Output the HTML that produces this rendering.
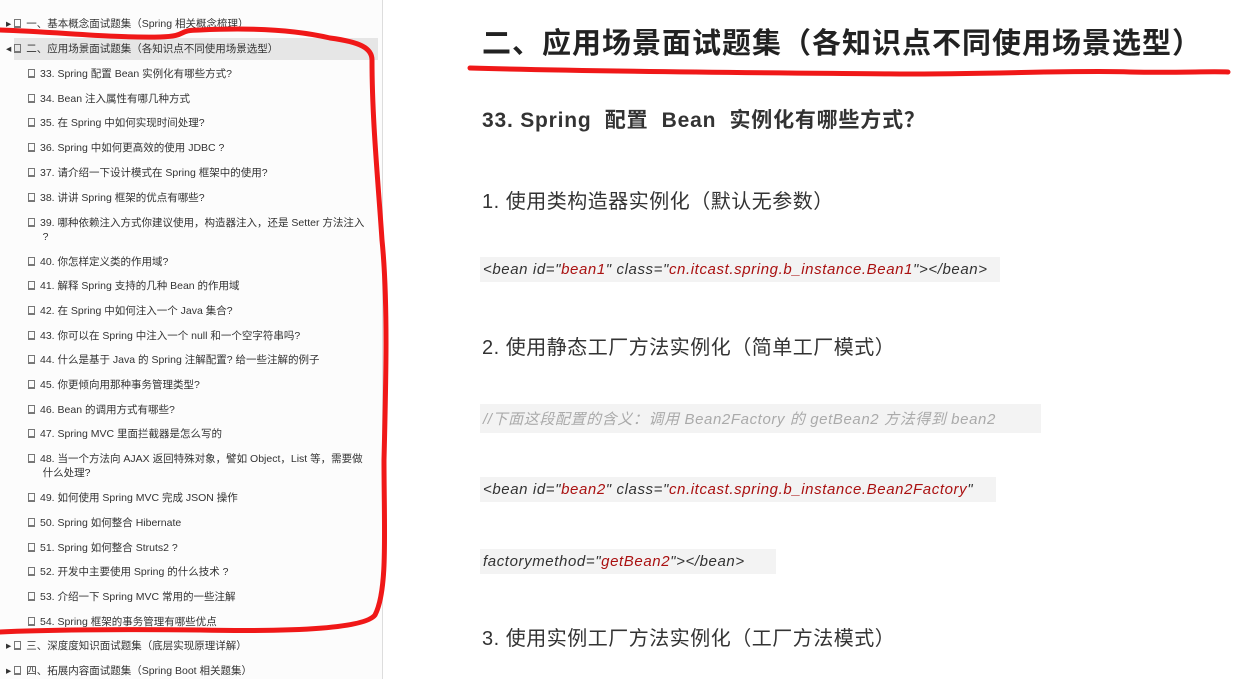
<!DOCTYPE html>
<html><head><meta charset="utf-8"><style>
body{margin:0;width:1240px;height:679px;overflow:hidden;background:#fff;font-family:"Liberation Sans","Noto Sans CJK SC",sans-serif;position:relative}
.side{position:absolute;left:0;top:0;width:382px;height:679px;background:#fcfcfc;border-right:1px solid #ddd}
.r{position:absolute;font-size:10.5px;color:#333;white-space:nowrap;line-height:14px}
.r i{display:inline-block;width:7px;height:9px;border:1px solid #777;border-bottom-width:2px;margin-right:5px;vertical-align:-1px;box-sizing:border-box}
.hl{position:absolute;left:14px;top:38px;width:364px;height:22px;background:#e6e6e6}
.t{position:absolute;color:#333;white-space:nowrap}
.code{position:absolute;left:480px;background:#f3f3f3;font-family:"Liberation Sans","Noto Sans CJK SC",sans-serif;font-style:italic;font-size:15px;letter-spacing:0.6px;color:#333;padding:4px 3px;white-space:nowrap}
.s{color:#a11}
</style></head><body>
<div class="side"></div>
<div class="hl"></div>
<div class="r" style="left:6px;top:17px">▸ <i></i>一、基本概念面试题集（Spring 相关概念梳理）</div>
<div class="r" style="left:6px;top:42px">◂ <i></i>二、应用场景面试题集（各知识点不同使用场景选型）</div>
<div class="r" style="left:28px;top:67px"><i></i>33. Spring 配置 Bean 实例化有哪些方式?</div>
<div class="r" style="left:28px;top:92px"><i></i>34. Bean 注入属性有哪几种方式</div>
<div class="r" style="left:28px;top:116px"><i></i>35. 在 Spring 中如何实现时间处理?</div>
<div class="r" style="left:28px;top:141px"><i></i>36. Spring 中如何更高效的使用 JDBC ?</div>
<div class="r" style="left:28px;top:166px"><i></i>37. 请介绍一下设计模式在 Spring 框架中的使用?</div>
<div class="r" style="left:28px;top:191px"><i></i>38. 讲讲 Spring 框架的优点有哪些?</div>
<div class="r" style="left:28px;top:216px"><i></i>39. 哪种依赖注入方式你建议使用，构造器注入，还是 Setter 方法注入<br>&nbsp;&nbsp;&nbsp;&nbsp;&nbsp;?</div>
<div class="r" style="left:28px;top:255px"><i></i>40. 你怎样定义类的作用域?</div>
<div class="r" style="left:28px;top:279px"><i></i>41. 解释 Spring 支持的几种 Bean 的作用域</div>
<div class="r" style="left:28px;top:304px"><i></i>42. 在 Spring 中如何注入一个 Java 集合?</div>
<div class="r" style="left:28px;top:329px"><i></i>43. 你可以在 Spring 中注入一个 null 和一个空字符串吗?</div>
<div class="r" style="left:28px;top:353px"><i></i>44. 什么是基于 Java 的 Spring 注解配置? 给一些注解的例子</div>
<div class="r" style="left:28px;top:378px"><i></i>45. 你更倾向用那种事务管理类型?</div>
<div class="r" style="left:28px;top:403px"><i></i>46. Bean 的调用方式有哪些?</div>
<div class="r" style="left:28px;top:427px"><i></i>47. Spring MVC 里面拦截器是怎么写的</div>
<div class="r" style="left:28px;top:452px"><i></i>48. 当一个方法向 AJAX 返回特殊对象，譬如 Object，List 等，需要做<br>&nbsp;&nbsp;&nbsp;&nbsp;&nbsp;什么处理?</div>
<div class="r" style="left:28px;top:491px"><i></i>49. 如何使用 Spring MVC 完成 JSON 操作</div>
<div class="r" style="left:28px;top:516px"><i></i>50. Spring 如何整合 Hibernate</div>
<div class="r" style="left:28px;top:541px"><i></i>51. Spring 如何整合 Struts2 ?</div>
<div class="r" style="left:28px;top:565px"><i></i>52. 开发中主要使用 Spring 的什么技术 ?</div>
<div class="r" style="left:28px;top:590px"><i></i>53. 介绍一下 Spring MVC 常用的一些注解</div>
<div class="r" style="left:28px;top:615px"><i></i>54. Spring 框架的事务管理有哪些优点</div>
<div class="r" style="left:6px;top:639px">▸ <i></i>三、深度度知识面试题集（底层实现原理详解）</div>
<div class="r" style="left:6px;top:664px">▸ <i></i>四、拓展内容面试题集（Spring Boot 相关题集）</div>

<div class="t" style="left:482px;top:20px;font-size:29px;font-weight:bold;color:#222;letter-spacing:1px">二、应用场景面试题集（各知识点不同使用场景选型）</div>
<div class="t" style="left:482px;top:104px;font-size:21px;font-weight:bold;letter-spacing:0.8px">33. Spring&nbsp; 配置&nbsp; Bean&nbsp; 实例化有哪些方式？</div>
<div class="t" style="left:482px;top:185px;font-size:20px;letter-spacing:0.5px">1. 使用类构造器实例化（默认无参数）</div>
<div class="code" style="top:257px;width:514px">&lt;bean id="<span class="s">bean1</span>" class="<span class="s">cn.itcast.spring.b_instance.Bean1</span>"&gt;&lt;/bean&gt;</div>
<div class="t" style="left:482px;top:331px;font-size:20px;letter-spacing:0.5px">2. 使用静态工厂方法实例化（简单工厂模式）</div>
<div class="code" style="top:404px;color:#aaa;width:555px">//下面这段配置的含义：调用 Bean2Factory 的 getBean2 方法得到 bean2</div>
<div class="code" style="top:477px;width:510px">&lt;bean id="<span class="s">bean2</span>" class="<span class="s">cn.itcast.spring.b_instance.Bean2Factory</span>"</div>
<div class="code" style="top:549px;width:290px">factorymethod="<span class="s">getBean2</span>"&gt;&lt;/bean&gt;</div>
<div class="t" style="left:482px;top:622px;font-size:20px;letter-spacing:0.5px">3. 使用实例工厂方法实例化（工厂方法模式）</div>

<svg style="position:absolute;left:0;top:0" width="1240" height="679">
<g fill="none" stroke="#f01818" stroke-width="5" stroke-linecap="round" stroke-linejoin="round">
<path d="M0,30 C60,32 110,38 160,37 C190,36 175,30 200,30 C260,27 300,31 330,38 C360,42 372,48 372,60 C372,120 378,180 382,240 C388,300 386,380 384,460 C384,530 388,590 375,615 C365,628 300,632 200,630 C120,629 40,630 0,632"/>
<path d="M470,68 C600,72 800,73 900,74 C1000,74 1080,70 1130,72 C1180,73 1210,71 1228,72"/>
</g></svg>
</body></html>
